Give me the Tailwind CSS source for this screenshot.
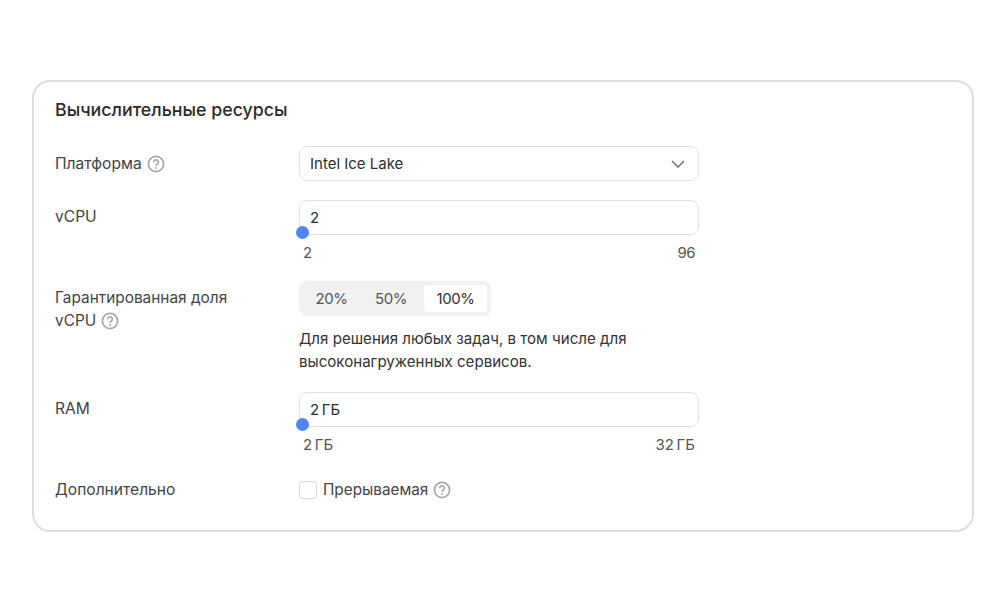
<!DOCTYPE html>
<html lang="ru">
<head>
  <meta charset="UTF-8" />
  <title>Вычислительные ресурсы</title>
  <script src="https://cdn.jsdelivr.net/npm/@tailwindcss/browser@4"></script>
</head>
<body class="bg-white min-h-screen font-['Inter',sans-serif] text-[15px] leading-5 text-[#2e2e2e] pt-20 px-8">

  <main class="w-[942px] h-[452px] border-2 border-[#dedede] rounded-[18px] pl-[21px] pt-[16px]">
    <h2 class="text-[17.8px] leading-6 font-medium text-[#2b2b2b]">Вычислительные ресурсы</h2>

    <!-- Платформа -->
    <div class="flex mt-6">
      <div class="w-[244px] flex items-center gap-[5px] h-[35px] text-[15.6px] text-[#444]">
        Платформа
        <svg class="w-[18px] h-[18px] text-[#aaa]" viewBox="0 0 18 18" fill="none" stroke="currentColor"><circle cx="9" cy="9" r="7.6" stroke-width="1.8"/><path d="M6.7 7.2a2.3 2.3 0 1 1 3.6 1.8c-.9.6-1.3 1-1.3 1.8" stroke-width="1.7"/><circle cx="9" cy="13" r="1" fill="currentColor" stroke="none"/></svg>
      </div>
      <div class="w-[400px] h-[35px] border border-[#e2e2e2] rounded-lg flex items-center justify-between pl-[10px] pr-[13px]">
        Intel Ice Lake
        <svg class="w-[14px] h-[8px] text-[#777]" viewBox="0 0 14 8" fill="none" stroke="currentColor" stroke-width="1.6"><path d="M1 1l6 6 6-6"/></svg>
      </div>
    </div>

    <!-- vCPU -->
    <div class="flex mt-[19px]">
      <div class="w-[244px] h-[35px] flex items-center pb-[1px] text-[15.6px] text-[#444]">vCPU</div>
      <div class="w-[400px]">
        <div class="relative h-[35px] border border-[#e2e2e2] rounded-lg flex items-center pl-[10px]">
          2
          <span class="absolute -left-[4px] -bottom-[5px] w-[13px] h-[13px] rounded-full bg-[#5282ff]"></span>
        </div>
        <div class="flex justify-between px-1 mt-[8px] text-[#555]"><span>2</span><span class="tracking-[-0.5px]">96</span></div>
      </div>
    </div>

    <!-- Гарантированная доля -->
    <div class="flex mt-[18px]">
      <div class="w-[244px] pt-[6px] leading-[22px] text-[15.4px] text-[#444]">
        Гарантированная доля<br />
        <span class="inline-flex items-center gap-[5px] mt-[1px]">vCPU
          <svg class="w-[18px] h-[18px] text-[#aaa]" viewBox="0 0 18 18" fill="none" stroke="currentColor"><circle cx="9" cy="9" r="7.6" stroke-width="1.8"/><path d="M6.7 7.2a2.3 2.3 0 1 1 3.6 1.8c-.9.6-1.3 1-1.3 1.8" stroke-width="1.7"/><circle cx="9" cy="13" r="1" fill="currentColor" stroke="none"/></svg>
        </span>
      </div>
      <div class="w-[400px]">
        <div class="inline-flex h-[35px] p-1 bg-[#f1f1f1] rounded-lg text-[#555] tracking-[-0.5px]">
          <span class="w-[57px] flex items-center justify-center">20%</span>
          <span class="w-[64px] pr-[2px] flex items-center justify-center">50%</span>
          <span class="w-[63px] flex items-center justify-center bg-white rounded-[4px] text-[#333]">100%</span>
        </div>
        <p class="mt-[11px] leading-[23px] text-[15.1px] text-[#333]">Для решения любых задач, в том числе для<br />высоконагруженных сервисов.</p>
      </div>
    </div>

    <!-- RAM -->
    <div class="flex mt-[19px]">
      <div class="w-[244px] h-[35px] flex items-center pb-[1px] text-[15.6px] text-[#444]">RAM</div>
      <div class="w-[400px]">
        <div class="relative h-[35px] border border-[#e2e2e2] rounded-lg flex items-center pl-[10px] [word-spacing:-1.5px]">
          2 ГБ
          <span class="absolute -left-[4px] -bottom-[5px] w-[13px] h-[13px] rounded-full bg-[#5282ff]"></span>
        </div>
        <div class="flex justify-between px-1 mt-[8px] text-[#555] [word-spacing:-1.5px]"><span>2 ГБ</span><span>32 ГБ</span></div>
      </div>
    </div>

    <!-- Дополнительно -->
    <div class="flex items-center mt-[25px]">
      <div class="w-[244px] text-[15.6px] text-[#444]">Дополнительно</div>
      <div class="flex items-center gap-[5px]">
        <span class="w-[18px] h-[18px] border border-[#d8d8d8] rounded"></span>
        <span class="ml-[1px] text-[15.3px] text-[#444]">Прерываемая</span>
        <svg class="w-[18px] h-[18px] text-[#aaa]" viewBox="0 0 18 18" fill="none" stroke="currentColor"><circle cx="9" cy="9" r="7.6" stroke-width="1.8"/><path d="M6.7 7.2a2.3 2.3 0 1 1 3.6 1.8c-.9.6-1.3 1-1.3 1.8" stroke-width="1.7"/><circle cx="9" cy="13" r="1" fill="currentColor" stroke="none"/></svg>
      </div>
    </div>
  </main>
</body>
</html>
